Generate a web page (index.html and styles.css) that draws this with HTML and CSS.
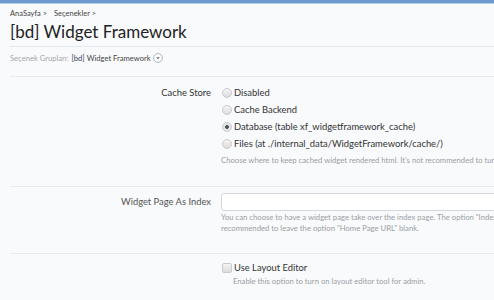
FILE: index.html
```html
<!DOCTYPE html>
<html lang="tr">
<head>
  <meta charset="UTF-8" />
  <title>[bd] Widget Framework</title>
  <link rel="stylesheet" href="styles.css">
</head>
<body>
  <div class="topbar"></div>

  <div class="page">
    <div class="crumbs">
      <span>AnaSayfa &gt;</span>
      <span>Seçenekler &gt;</span>
    </div>
    <h1 class="title">[bd] Widget Framework</h1>

    <div class="groups">
      Seçenek Grupları: <a href="#">[bd]</a>&nbsp;<span class="group-name">Widget Framework</span>
      <span class="menu-btn">
        <svg width="10" height="10" viewBox="0 0 10 10">
          <circle cx="5" cy="5" r="4.4" fill="#fff" stroke="#9aa0a6" stroke-width="0.8"/>
          <path d="M3.2 4.2 L6.8 4.2 L5 6.3 Z" fill="#666"/>
        </svg>
      </span>
    </div>

    <div class="option">
      <div class="label">Cache Store</div>
      <div class="control">
        <label class="choice"><input type="radio" name="cache"> Disabled</label>
        <label class="choice"><input type="radio" name="cache"> Cache Backend</label>
        <label class="choice"><input type="radio" name="cache" checked> Database (table xf_widgetframework_cache)</label>
        <label class="choice"><input type="radio" name="cache"> Files (at ./internal_data/WidgetFramework/cache/)</label>
        <p class="hint">Choose where to keep cached widget rendered html. It's not recommended to turn off caching.</p>
      </div>
    </div>

    <div class="option option-input">
      <div class="label label-input">Widget Page As Index</div>
      <div class="control">
        <input type="text" class="textbox">
        <p class="hint hint-tight">You can choose to have a widget page take over the index page. The option "Index Route" will be ignored. It's<br>recommended to leave the option "Home Page URL" blank.</p>
      </div>
    </div>

    <div class="option option-check">
      <div class="label"></div>
      <div class="control">
        <label class="choice"><input type="checkbox"> Use Layout Editor</label>
        <p class="hint hint-indent">Enable this option to turn on layout editor tool for admin.</p>
      </div>
    </div>
  </div>
</body>
</html>
```

FILE: styles.css
```css
body {
  margin: 0;
  background: #f9fafc;
  font-family: Lato, "Open Sans", sans-serif;
  color: #333;
  overflow: hidden;
}

.topbar {
  height: 3px;
  background: #6d9bd0;
  border-bottom: 1px solid #b5cce6;
}

.page {
  padding-left: 10px;
}

.crumbs {
  font-size: 7.5px;
  color: #444;
  line-height: 10px;
  padding-top: 5px;
  height: 11px;
}

.crumbs span {
  margin-right: 5px;
}

.title {
  margin: 0;
  font-size: 17px;
  font-weight: normal;
  color: #222;
  line-height: 24px;
  height: 26px;
  border-bottom: 1px solid #e3e9ef;
}

.groups {
  display: flex;
  align-items: center;
  height: 22px;
  padding-bottom: 7px;
  font-size: 7.6px;
  color: #a4a8ad;
  border-bottom: 1px solid #e3ecef;
}

.groups a {
  color: #2d3f58;
  text-decoration: none;
  margin-left: 3px;
}

.group-name {
  color: #444;
}

.menu-btn {
  margin-left: 2px;
  display: inline-flex;
}

.option {
  display: flex;
  border-bottom: 1px solid #e3ecef;
  padding: 7px 0 20px;
}

.option-input {
  padding-top: 6px;
  padding-bottom: 19px;
}

.option-check {
  padding-top: 5px;
}

.label {
  width: 201px;
  padding-right: 10px;
  flex-shrink: 0;
  text-align: right;
  font-size: 9.4px;
  line-height: 17px;
  color: #333;
}

.label-input {
  color: #555;
}

.control {
  flex: 1;
  min-width: 0;
  white-space: nowrap;
  overflow: hidden;
}

.choice {
  display: flex;
  align-items: center;
  font-size: 9.4px;
  line-height: 17px;
  color: #333;
}

.choice input {
  appearance: none;
  width: 10px;
  height: 10px;
  margin: 0 2px 0 1px;
  border: 1px solid #c9cbce;
  background: linear-gradient(#f4f4f4, #dcdcdc);
  box-sizing: border-box;
}

.choice input[type="radio"] {
  border-radius: 50%;
}

.choice input[type="radio"]:checked {
  background: radial-gradient(circle, #555 0, #555 1.6px, #e6e6e6 2.2px);
}

.choice input[type="checkbox"] {
  border-radius: 2px;
}

.hint {
  margin: 3px 0 0;
  font-size: 7.7px;
  line-height: 11px;
  color: #9a9ea3;
}

.hint-tight {
  margin-top: 1px;
}

.hint-indent {
  margin: 0 0 0 12px;
}

.textbox {
  display: block;
  width: 320px;
  height: 18px;
  margin: 0;
  box-sizing: border-box;
  border: 1px solid #d4d8dd;
  border-radius: 3px;
  background: #fff;
}
```
